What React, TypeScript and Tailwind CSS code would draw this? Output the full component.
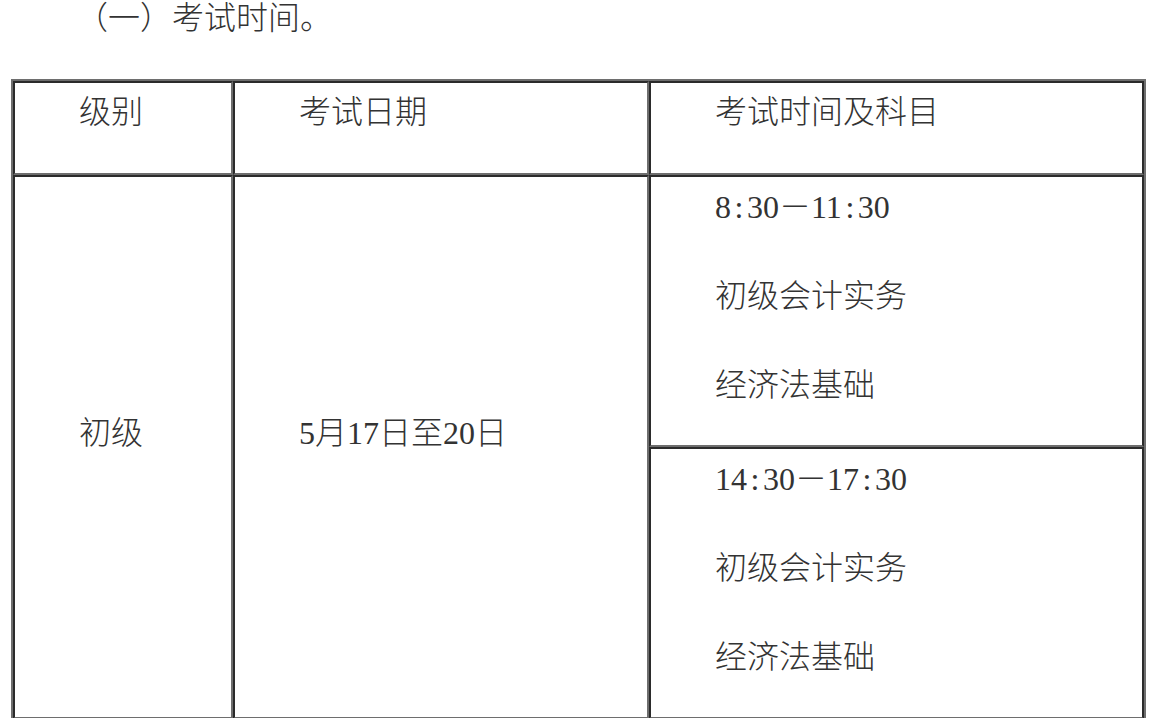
import React from "react";

const DARK = "border-t-[#2b2b2b] border-l-[#2b2b2b]";

function Colon() {
  return <span className="inline-block w-4 text-center indent-0">:</span>;
}

function Line({ children }: { children: React.ReactNode }) {
  return <div className="h-12 leading-[48px] indent-[64px] whitespace-nowrap">{children}</div>;
}

export default function App() {
  return (
    <div
      className="bg-white w-[1157px] h-[718px] overflow-hidden text-[32px] text-[#333] font-light"
      style={{ fontFamily: '"Liberation Serif", "Noto Sans CJK SC", serif' }}
    >
      <p className="h-9 leading-[36px] ml-[12px] indent-[64px] whitespace-nowrap">（一）考试时间。</p>
      <div className="mt-[43px] ml-[11px] w-[1135px] border-2 border-[#6e6e6e]">
        <div className="grid grid-cols-[220px_416px_495px] grid-rows-[94px_272px_272px]">
          <div className={`border-2 border-b-[#6e6e6e] border-r-[#6e6e6e] ${DARK} pt-[5px]`}>
            <Line>级别</Line>
          </div>
          <div className={`border-2 border-b-[#6e6e6e] border-r-[#6e6e6e] ${DARK} pt-[5px]`}>
            <Line>考试日期</Line>
          </div>
          <div className={`border-2 border-b-[#6e6e6e] border-r-[#2b2b2b] ${DARK} pt-[5px]`}>
            <Line>考试时间及科目</Line>
          </div>

          <div className={`row-span-2 border-2 border-b-[#6e6e6e] border-r-[#6e6e6e] ${DARK} flex items-center pb-[29px]`}>
            <Line>初级</Line>
          </div>
          <div className={`row-span-2 border-2 border-b-[#6e6e6e] border-r-[#6e6e6e] ${DARK} flex items-center pb-[29px]`}>
            <Line>5月17日至20日</Line>
          </div>
          <div className={`border-2 border-b-[#6e6e6e] border-r-[#2b2b2b] ${DARK} pt-[6px] flex flex-col gap-[41px]`}>
            <Line>
              8<Colon />30－11<Colon />30
            </Line>
            <Line>初级会计实务</Line>
            <Line>经济法基础</Line>
          </div>
          <div className={`border-2 border-b-[#6e6e6e] border-r-[#2b2b2b] ${DARK} pt-[6px] flex flex-col gap-[41px]`}>
            <Line>
              14<Colon />30－17<Colon />30
            </Line>
            <Line>初级会计实务</Line>
            <Line>经济法基础</Line>
          </div>
        </div>
      </div>
    </div>
  );
}
